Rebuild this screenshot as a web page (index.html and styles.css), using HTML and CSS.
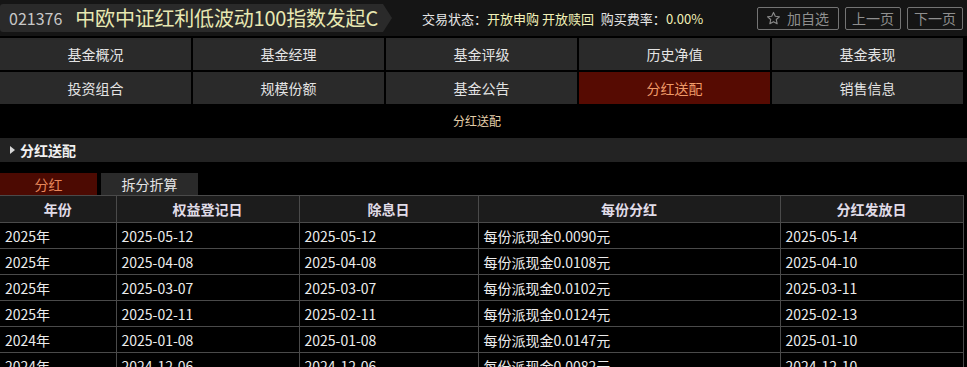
FILE: index.html
```html
<!DOCTYPE html>
<html lang="zh-CN">
<head>
<meta charset="utf-8">
<title>分红送配</title>
<link rel="stylesheet" href="styles.css">
</head>
<body>
<div class="topbar">
  <div class="title">
    <span class="code">021376</span>
    <span class="name">中欧中证红利低波动100指数发起C</span>
  </div>
  <div class="status">
    <span class="lbl">交易状态：</span><span class="val">开放申购 开放赎回</span>
    <span class="lbl sp">购买费率：</span><span class="val">0.00%</span>
  </div>
  <div class="btns">
    <button class="btn fav"><svg class="star" viewBox="0 0 16 16" width="15" height="15"><path d="M8 1.5 L9.9 5.6 L14.3 6.1 L11 9.1 L11.9 13.6 L8 11.4 L4.1 13.6 L5 9.1 L1.7 6.1 L6.1 5.6 Z" fill="none" stroke="#8a8a8a" stroke-width="1.2" stroke-linejoin="round"/></svg>加自选</button>
    <button class="btn">上一页</button>
    <button class="btn">下一页</button>
  </div>
</div>

<nav class="nav">
  <div class="cell">基金概况</div>
  <div class="cell">基金经理</div>
  <div class="cell">基金评级</div>
  <div class="cell">历史净值</div>
  <div class="cell">基金表现</div>
  <div class="cell">投资组合</div>
  <div class="cell">规模份额</div>
  <div class="cell">基金公告</div>
  <div class="cell active">分红送配</div>
  <div class="cell">销售信息</div>
</nav>

<div class="crumb">分红送配</div>

<div class="section"><span class="tri"></span>分红送配</div>

<div class="tabs">
  <div class="tab on">分红</div>
  <div class="tab">拆分折算</div>
</div>

<table class="grid">
  <colgroup>
    <col class="c1"><col class="c2"><col class="c3"><col class="c4"><col class="c5">
  </colgroup>
  <thead>
    <tr><th>年份</th><th>权益登记日</th><th>除息日</th><th>每份分红</th><th>分红发放日</th></tr>
  </thead>
  <tbody>
    <tr><td>2025年</td><td>2025-05-12</td><td>2025-05-12</td><td>每份派现金0.0090元</td><td>2025-05-14</td></tr>
    <tr><td>2025年</td><td>2025-04-08</td><td>2025-04-08</td><td>每份派现金0.0108元</td><td>2025-04-10</td></tr>
    <tr><td>2025年</td><td>2025-03-07</td><td>2025-03-07</td><td>每份派现金0.0102元</td><td>2025-03-11</td></tr>
    <tr><td>2025年</td><td>2025-02-11</td><td>2025-02-11</td><td>每份派现金0.0124元</td><td>2025-02-13</td></tr>
    <tr><td>2024年</td><td>2025-01-08</td><td>2025-01-08</td><td>每份派现金0.0147元</td><td>2025-01-10</td></tr>
    <tr><td>2024年</td><td>2024-12-06</td><td>2024-12-06</td><td>每份派现金0.0082元</td><td>2024-12-10</td></tr>
  </tbody>
</table>
</body>
</html>
```

FILE: styles.css
```css
* { box-sizing: border-box; }
html, body { margin: 0; padding: 0; background: #000; }
body {
  width: 967px;
  height: 367px;
  overflow: hidden;
  font-family: "Noto Sans CJK SC", "DejaVu Sans", sans-serif;
  color: #e6e6e6;
  font-size: 14px;
}

.topbar {
  height: 36px;
  background: #151515;
  display: flex;
  align-items: center;
}
.title {
  width: 392px;
  height: 28px;
  background: #2a2a2a;
  display: flex;
  align-items: center;
  padding-left: 9px;
  clip-path: polygon(0 0, 383px 0, 392px 50%, 383px 100%, 0 100%);
  border-radius: 3px 0 0 3px;
}
.code { font-size: 16px; color: #c8c8c8; line-height: 1; }
.name { font-size: 20px; color: #e8e8b2; margin-left: 13px; line-height: 1; letter-spacing: -0.2px; }

.status {
  margin-left: 30px;
  font-size: 13px;
  line-height: 1;
  white-space: nowrap;
}
.status .lbl { color: #e6e6e6; }
.status .val { color: #f2f2b8; }
.status .sp { margin-left: 4px; }

.btns {
  margin-left: auto;
  margin-right: 4px;
  display: flex;
  gap: 6px;
}
.btn {
  font-family: inherit;
  height: 23px;
  padding: 0 6px;
  background: #151515;
  border: 1px solid #747474;
  border-radius: 2px;
  color: #8f8f8f;
  font-size: 14px;
  line-height: 1;
  display: flex;
  align-items: center;
  gap: 6px;
}
.btn.fav { padding: 0 6px 0 8px; width: 82px; }
.star { display: block; }

.nav {
  margin-top: 2px;
  display: grid;
  grid-template-columns: repeat(5, 191px);
  grid-auto-rows: 32px;
  gap: 2px;
}
.cell {
  background: #2a2a2a;
  display: flex;
  align-items: center;
  justify-content: center;
  font-size: 14px;
  color: #e4e4e4;
}
.cell.active { background: #560b02; color: #f09a68; }

.crumb {
  height: 34px;
  padding-left: 453px;
  padding-top: 10px;
  font-size: 12px;
  line-height: 14px;
  color: #e4cfaa;
}

.section {
  height: 24px;
  background: #232323;
  display: flex;
  align-items: center;
  padding-left: 10px;
  font-weight: bold;
  font-size: 14px;
  color: #f2f2f2;
}
.tri {
  width: 0; height: 0;
  border-top: 4px solid transparent;
  border-bottom: 4px solid transparent;
  border-left: 5px solid #d8d8d8;
  margin-right: 5px;
}

.tabs {
  margin-top: 11px;
  display: flex;
  gap: 4px;
  height: 22px;
}
.tab {
  width: 97px;
  background: #2a2a2a;
  display: flex;
  align-items: center;
  justify-content: center;
  font-size: 14px;
  color: #e4e4e4;
}
.tab.on { background: #4c0a02; color: #e8875a; }

.grid {
  border-collapse: collapse;
  width: 963px;
  table-layout: fixed;
  font-size: 14px;
}
.c1 { width: 116px; }
.c2 { width: 183px; }
.c3 { width: 179px; }
.c4 { width: 302px; }
.c5 { width: 183px; }
.grid th, .grid td {
  border: 1px solid #4a4a4a;
  white-space: nowrap;
  overflow: hidden;
}
.grid th {
  height: 27px;
  background: #1c1c1c;
  color: #e0dce8;
  font-weight: bold;
  text-align: center;
  padding: 0;
}
.grid td {
  height: 26px;
  padding: 0 0 0 5px;
  color: #ececec;
  text-align: left;
}
.grid th:first-child, .grid td:first-child { border-left: none; }
```
